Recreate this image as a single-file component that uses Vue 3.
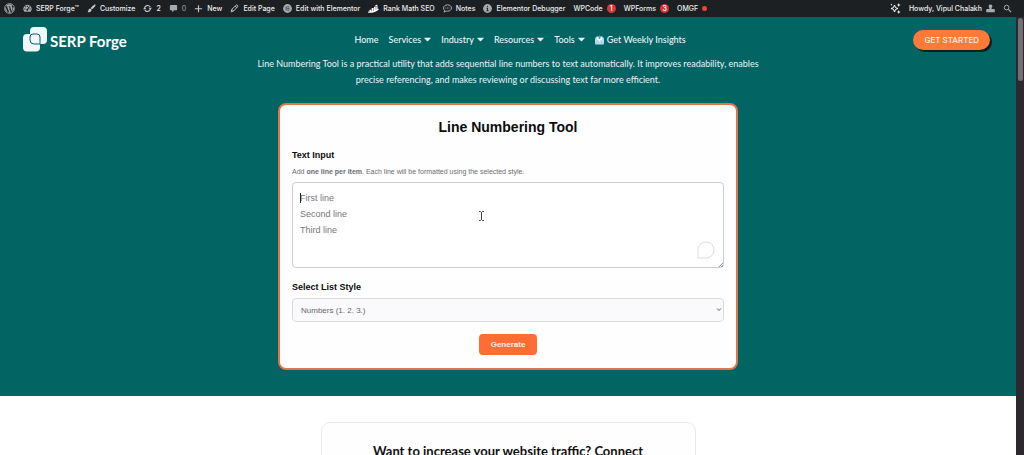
<script setup>
import { ref } from 'vue'

const text = ref('')
const style = ref('numbers')
const placeholder = 'First line\nSecond line\nThird line'
const styles = [
  { value: 'numbers', label: 'Numbers (1. 2. 3.)' },
  { value: 'letters', label: 'Letters (A. B. C.)' },
  { value: 'roman', label: 'Roman (I. II. III.)' },
]
const adminItems = [
  { icon: 'wp', name: 'WordPress' },
  { icon: 'gauge', label: 'SERP Forge™' },
  { icon: 'brush', label: 'Customize' },
  { icon: 'refresh', label: '2' },
  { icon: 'comment', label: '0', dim: true },
  { icon: 'plus', label: 'New' },
  { icon: 'pencil', label: 'Edit Page' },
  { icon: 'elementor', label: 'Edit with Elementor' },
  { icon: 'rank', label: 'Rank Math SEO' },
  { icon: 'notes', label: 'Notes' },
  { icon: 'info', label: 'Elementor Debugger' },
  { label: 'WPCode', badge: '1' },
  { label: 'WPForms', badge: '3' },
  { label: 'OMGF', dot: true },
]
const navItems = [
  { label: 'Home' },
  { label: 'Services', menu: true },
  { label: 'Industry', menu: true },
  { label: 'Resources', menu: true },
  { label: 'Tools', menu: true },
  { label: 'Get Weekly Insights', mail: true },
]
</script>

<template>
  <div class="shell">
    <nav class="admin" aria-label="Admin toolbar">
      <a v-for="(item, i) in adminItems" :key="i" href="#" :aria-label="item.name" :class="['admin-item', item.icon, { dim: item.dim }]">
        <svg v-if="item.icon === 'wp'" class="icon big" viewBox="0 0 20 20">
          <circle cx="10" cy="10" r="9" fill="none" stroke="currentColor" stroke-width="1.5" />
          <path fill="currentColor" d="M2.8 7.2 6.7 17.3A8 8 0 0 1 2.8 7.2ZM4 5A8 8 0 0 1 15.4 4.2C13.9 4.4 13.8 5.8 14.7 7.1 15.7 8.6 15.5 10.2 14.9 12L13.8 15.2 11 6.6 12 6.4V5.7H7.9V6.4L9 6.6 10.1 9.6 8.4 14.6 5.7 6.6 6.7 6.4V5.7H3.6ZM10.2 11.1 12.6 17.5A8 8 0 0 1 8 17.7ZM17.2 6.6A8 8 0 0 1 14 16.9L16.6 9.5Z" />
        </svg>
        <svg v-else-if="item.icon === 'gauge'" class="icon" viewBox="0 0 20 20">
          <path fill="currentColor" fill-rule="evenodd" d="M3.2 17A9 9 0 1 1 16.8 17ZM9 4v2.5h2V4ZM4.5 6 6 7.5 7.4 6.1 5.9 4.6ZM3 10v2h2.5v-2ZM14.5 10v2H17v-2ZM13.8 5 9.2 11.2a2 2 0 1 0 2 1.2L15.3 6Z" />
        </svg>
        <svg v-else-if="item.icon === 'brush'" class="icon" viewBox="0 0 20 20">
          <path fill="currentColor" d="M18.6 1.3c.9.8.3 1.9-.4 2.9-2 2.7-5.200 6.200-7.100 7.500L8.400 9.200C10 6.900 13.600 3.300 16 1.700c.9-.7 1.900-1.100 2.600-.4ZM7.500 10.200l2.600 2.500c.2 1.400-.3 2.800-1.800 3.900-2 1.500-4.900 1.700-7.300 2 1.500-1.300 1.500-2.900 2.200-4.800.8-2.200 2.300-3.500 4.300-3.600Z" />
        </svg>
        <svg v-else-if="item.icon === 'refresh'" class="icon" viewBox="0 0 20 20">
          <path fill="none" stroke="currentColor" stroke-width="2.4" d="M3.500 8.500A7 7 0 0 1 16 6.500M16.500 11.500A7 7 0 0 1 4 13.500" />
          <path fill="currentColor" d="M12.300 8.500H20L16.200 13ZM0 11.500H7.700L3.800 7Z" />
        </svg>
        <svg v-else-if="item.icon === 'comment'" class="icon" viewBox="0 0 20 20">
          <path fill="currentColor" d="M4 2h12a2 2 0 0 1 2 2v8a2 2 0 0 1-2 2h-4.500L7 18.500V14H4a2 2 0 0 1-2-2V4a2 2 0 0 1 2-2Z" />
        </svg>
        <svg v-else-if="item.icon === 'plus'" class="icon" viewBox="0 0 20 20">
          <path stroke="currentColor" stroke-width="2.400" d="M10 2.500v16M2 10.500h16" />
        </svg>
        <svg v-else-if="item.icon === 'pencil'" class="icon" viewBox="0 0 20 20">
          <path fill="none" stroke="currentColor" stroke-width="2" stroke-linejoin="round" d="M2.500 17.500 4 12 13.500 2.500q1.500-1 3 .5t.5 3L8 15.500ZM11.500 4.500l4 4M4 12l4 3.500" />
        </svg>
        <svg v-else-if="item.icon === 'elementor'" class="icon" viewBox="0 0 20 20">
          <circle cx="10" cy="10" r="9.800" fill="currentColor" />
          <path stroke="#1d2023" stroke-width="1.500" d="M7 5.500v9M9.500 6.400h4.500M9.500 10h4.500M9.500 13.600h4.500" />
        </svg>
        <svg v-else-if="item.icon === 'rank'" class="icon wide" viewBox="0 0 24 20">
          <path fill="#fff" d="M3 13h4v5H3ZM8 9h4v9H8ZM13 6h4v10h-4ZM17.500 4.500 16 6h5v8l-3 2V5L15 4l5-3 1 5Z" />
          <path fill="none" stroke="#fff" stroke-width="2.500" d="M0 18C8 19 16 17 23 11" />
        </svg>
        <svg v-else-if="item.icon === 'notes'" class="icon" viewBox="0 0 20 20">
          <path fill="none" stroke="currentColor" stroke-width="1.800" d="M10 2c5 0 8.800 2.900 8.800 7s-3.800 7-8.800 7q-1.500 0-3-.4L2.500 18l1.100-4C2 12.700 1.200 11 1.200 9 1.200 4.900 5 2 10 2Z" />
          <path stroke="currentColor" stroke-width="1.800" d="M5.500 9h2M9 9h2M12.500 9h2" />
        </svg>
        <svg v-else-if="item.icon === 'info'" class="icon" viewBox="0 0 20 20">
          <circle cx="10" cy="10" r="9.800" fill="currentColor" />
          <path stroke="#1d2023" stroke-width="2" d="M10 4v2.500M8 9h2.200v6M7.500 15h5" />
        </svg>
        <span v-if="item.label">{{ item.label }}</span>
        <span v-if="item.badge" class="badge">{{ item.badge }}</span>
        <span v-if="item.dot" class="dot"></span>
      </a>
      <span class="spacer"></span>
      <a href="#" class="admin-item" aria-label="Assistant">
        <svg class="icon sparkle" viewBox="0 0 22 22">
          <path fill="none" stroke="#fff" stroke-width="2" stroke-linejoin="round" d="M9 4 11 9.200 16 11 11 12.800 9 18 7 12.800 2 11 7 9.200Z" />
          <path fill="#fff" d="m17.500 0 1.100 2.900 2.900 1.100-2.900 1.100-1.100 2.900-1.100-2.900-2.900-1.100 2.900-1.100ZM17.500 14l1.100 2.900 2.900 1.100-2.900 1.100-1.100 2.900-1.100-2.900-2.900-1.100 2.900-1.100ZM3 1l.7 1.800 1.800.7-1.800.7L3 6l-.7-1.800L.5 3.500l1.800-.7Z" />
        </svg>
      </a>
      <a href="#" class="admin-item">
        <span>Howdy, Vipul Chalakh</span>
        <svg class="icon" viewBox="0 0 20 20">
          <path fill="currentColor" d="M10 1a4.200 4.200 0 0 1 2.500 7.600V11H18q1.500 0 1.500 2v5.500H.5V13q0-2 1.500-2h5.500V8.600A4.200 4.200 0 0 1 10 1Z" />
        </svg>
      </a>
      <a href="#" class="admin-item" aria-label="Search">
        <svg class="icon" viewBox="0 0 20 20">
          <circle cx="8" cy="8" r="5.200" fill="none" stroke="currentColor" stroke-width="2.200" />
          <path stroke="currentColor" stroke-width="2.800" d="m12 12 6 6" />
        </svg>
      </a>
    </nav>

    <div class="viewport">
      <div class="page">
        <section class="hero">
          <header class="site-header">
            <a href="#" class="logo">
              <svg viewBox="0 0 24 25">
                <rect x="7" y="0" width="17" height="17" rx="4" fill="#f1f7fb" />
                <rect x="0" y="7" width="17" height="17.500" rx="4" fill="#f1f7fb" />
                <path fill="#f1f7fb" stroke="#036464" stroke-width="1" d="M10 7h4q3 0 3 3v7h-6q-4 0-4-4v-3q0-3 3-3Z" />
              </svg>
              <span>SERP Forge</span>
            </a>
            <nav class="menu" aria-label="Main">
              <a v-for="item in navItems" :key="item.label" href="#">
                <svg v-if="item.mail" class="mail" viewBox="0 0 18 20">
                  <rect x="0" y="5" width="18" height="14" rx="1.500" fill="#b9dcec" />
                  <path fill="#f4fafc" d="M3 3h12v8l-6 4-6-4Z" />
                  <path fill="#3f9dcd" d="M7.500 8V4.500h-2L9 0l3.500 4.500h-2V8Z" />
                  <path fill="none" stroke="#7eb1c8" d="m0 18.500 7-6.500M18 18.500 11 12M0 7l9 7 9-7" />
                </svg>
                <span>{{ item.label }}</span>
                <svg v-if="item.menu" class="caret" viewBox="0 0 12 8"><path fill="currentColor" d="M1 1h10q1 0 .3 1L7 6.500q-1 1-2 0L.7 2Q0 1 1 1Z" /></svg>
              </a>
            </nav>
            <a href="#" class="cta">GET STARTED</a>
          </header>

          <p class="intro">Line Numbering Tool is a practical utility that adds sequential line numbers to text automatically. It improves readability, enables precise referencing, and makes reviewing or discussing text far more efficient.</p>

          <form class="tool" @submit.prevent>
            <h1>Line Numbering Tool</h1>
            <label for="text-input">Text Input</label>
            <p id="hint" class="hint">Add <b>one line per item</b>. Each line will be formatted using the selected style.</p>
            <div class="field">
              <textarea id="text-input" v-model="text" :placeholder="placeholder" aria-describedby="hint"></textarea>
              <span class="text-caret"></span>
              <svg class="bubble" viewBox="0 0 18 18"><path fill="#fff" stroke="#dedbe2" d="M1 17V9a8 8 0 1 1 8 8Z" /></svg>
              <svg class="grip" viewBox="0 0 6 6"><path stroke="#777" d="M1 6 6 1M4 6l2-2" /></svg>
              <svg class="pointer" viewBox="0 0 7 10"><path fill="none" stroke="#444" d="M1 .500h1.500l1 1 1-1H6M1 9.500h1.500l1-1 1 1H6M3.500 1v8" /></svg>
            </div>
            <label for="list-style">Select List Style</label>
            <div class="select-wrap">
              <select id="list-style" v-model="style">
                <option v-for="s in styles" :key="s.value" :value="s.value">{{ s.label }}</option>
              </select>
              <svg class="chevron" viewBox="0 0 6 4"><path fill="none" stroke="#555" d="m1 .500 2 2 2-2" /></svg>
            </div>
            <button type="submit">Generate</button>
          </form>
        </section>

        <section class="promo">
          <h2>Want to increase your website traffic? Connect</h2>
        </section>
      </div>
      <div class="scrollbar"><div class="thumb"></div></div>
    </div>
  </div>
</template>

<style>
body {
  background: #fff;
}
</style>

<style scoped>
* {
  box-sizing: border-box;
}
a {
  color: inherit;
  text-decoration: none;
}
.shell {
  height: 100vh;
  display: flex;
  flex-direction: column;
  overflow: hidden;
  font-family: Lato, "Open Sans", sans-serif;
}
.admin {
  flex: none;
  height: 17px;
  padding: 0 12px 0 4px;
  display: flex;
  align-items: center;
  gap: 8px;
  background: #1d2023;
  color: #eeeeef;
  font: 500 7px/17px Inter, Roboto, sans-serif;
  white-space: nowrap;
}
.admin-item {
  display: flex;
  align-items: center;
  gap: 4px;
}
.dim {
  color: #8d9094;
}
.icon {
  width: 9px;
  height: 9px;
  color: #a7aaad;
}
.brush .icon,
.plus .icon,
.refresh .icon,
.notes .icon,
.pencil .icon {
  color: #c9cbcd;
}
.icon.big,
.icon.wide,
.icon.sparkle {
  width: 11px;
}
.icon.big,
.icon.sparkle {
  height: 11px;
}
.spacer {
  flex: 1;
}
.badge {
  width: 9px;
  height: 9px;
  border-radius: 5px;
  background: #d63638;
  color: #fff;
  line-height: 9px;
  text-align: center;
}
.dot {
  width: 5px;
  height: 5px;
  border-radius: 3px;
  background: #f3423b;
}
.viewport {
  flex: 1;
  min-height: 0;
  display: flex;
}
.page {
  flex: 1;
  min-width: 0;
  overflow: hidden;
}
.scrollbar {
  width: 8px;
  padding: 1px 1px 0 2px;
  background: #2d282d;
}
.thumb {
  height: 63px;
  border-radius: 3px;
  background: #736f75;
}
.hero {
  padding-bottom: 26px;
  background: #036464;
  color: #e9f5f5;
}
.site-header {
  position: relative;
  z-index: 1;
  height: 43px;
  padding: 2px 26px 0 23px;
  display: flex;
  align-items: center;
  justify-content: space-between;
  background: #036464;
}
.logo {
  display: flex;
  align-items: center;
  gap: 3px;
  color: #fff;
  font-size: 15px;
  font-weight: 700;
}
.logo span {
  padding-top: 3px;
}
.logo svg {
  width: 24px;
  height: 25px;
}
.menu {
  display: flex;
  gap: 10px;
  font-size: 9px;
  font-weight: 500;
}
.menu a {
  display: flex;
  align-items: center;
  gap: 3px;
}
.caret {
  width: 7px;
  height: 5px;
}
.mail {
  width: 9px;
  height: 10px;
}
.cta {
  padding: 0 11px;
  border-radius: 10px;
  background: #ff7a38;
  box-shadow: 2px 2px 0 #08201f;
  color: #fff3e8;
  font: 500 8px/20px Inter, sans-serif;
}
.intro {
  max-width: 540px;
  margin: -4px auto 15px;
  padding: 0 10px;
  font-size: 9px;
  line-height: 16px;
  text-align: center;
}
.tool {
  max-width: 460px;
  margin: 0 auto;
  padding: 14px 12px 13px;
  display: flex;
  flex-direction: column;
  border: 2px solid #e2734a;
  border-radius: 8px;
  background: #fefefe;
  color: #0b0b0d;
  font-family: "Liberation Sans", Arial, sans-serif;
}
h1 {
  margin: 0 0 14px;
  font-size: 14px;
  line-height: 16px;
  text-align: center;
}
label {
  font-size: 9px;
  font-weight: 700;
  line-height: 12px;
}
.hint {
  margin: 5px 0 4px;
  color: #6b6b70;
  font-size: 7px;
  line-height: 12px;
}
.field,
.select-wrap {
  position: relative;
  display: flex;
}
.field {
  margin-bottom: 13px;
}
textarea {
  flex: 1;
  height: 86px;
  padding: 7px;
  resize: none;
  border: 1px solid #cfcbd2;
  border-radius: 4px;
  outline: none;
  background: #fff;
  font: 9px/16px "Liberation Sans", Arial, sans-serif;
}
textarea::placeholder {
  color: #77777b;
}
.text-caret {
  position: absolute;
  left: 8px;
  top: 11px;
  width: 1px;
  height: 10px;
  background: #222;
}
.bubble {
  position: absolute;
  right: 9px;
  bottom: 9px;
  width: 18px;
  height: 18px;
}
.grip {
  position: absolute;
  right: 1px;
  bottom: 1px;
  width: 5px;
  height: 5px;
}
.pointer {
  position: absolute;
  left: 186px;
  top: 29px;
  width: 7px;
  height: 10px;
}
.select-wrap {
  margin: 5px 0 12px;
}
select {
  flex: 1;
  height: 24px;
  padding: 0 8px;
  appearance: none;
  border: 1px solid #dcd9de;
  border-radius: 4px;
  background: #faf9fb;
  color: #67676c;
  font: 8px "Liberation Sans", Arial, sans-serif;
}
.chevron {
  position: absolute;
  right: 2px;
  top: 10px;
  width: 6px;
  height: 4px;
}
button {
  align-self: center;
  padding: 0 12px;
  border: 0;
  border-radius: 4px;
  background: #ff6d35;
  color: #fff0e6;
  font: 700 8px/21px "Liberation Sans", Arial, sans-serif;
}
.promo {
  max-width: 375px;
  min-height: 120px;
  margin: 26px auto 0;
  padding: 20px 24px;
  border: 1px solid #e9e9ea;
  border-radius: 9px;
  background: #fefefe;
  color: #111;
}
h2 {
  margin: 0;
  font-size: 13px;
  font-weight: 700;
  line-height: 16px;
  text-align: center;
  white-space: nowrap;
}
</style>
